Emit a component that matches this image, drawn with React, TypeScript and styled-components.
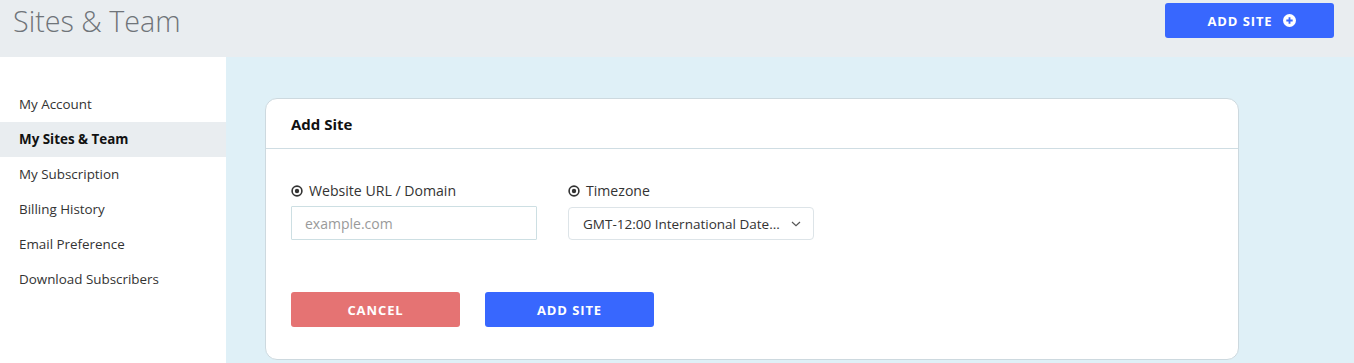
import React from "react";
import styled, { createGlobalStyle } from "styled-components";

const Global = createGlobalStyle`
  html, body { margin: 0; padding: 0; }
  body {
    font-family: "Open Sans", "Noto Sans", sans-serif;
    background: #dff0f7;
    color: #333;
  }
  * { box-sizing: border-box; }
`;

const Page = styled.div`
  display: flex;
  flex-direction: column;
  min-height: 363px;
`;

const TopBar = styled.header`
  height: 57px;
  background: #e9edf0;
  display: flex;
  align-items: flex-start;
  justify-content: space-between;
  padding: 0 20px 0 13px;
`;

const PageTitle = styled.h1`
  margin: 0;
  margin-top: 2px;
  font-weight: 300;
  font-size: 28.7px;
  line-height: 38px;
  color: #6f7479;
`;

const Button = styled.button<{ $variant: "primary" | "danger" }>`
  width: 169px;
  height: 35px;
  border: none;
  border-radius: 3px;
  background: ${(p) => (p.$variant === "primary" ? "#3867fe" : "#e57373")};
  color: #fff;
  font-family: "Open Sans", sans-serif;
  font-weight: 700;
  font-size: 13px;
  letter-spacing: 0.9px;
  display: inline-flex;
  align-items: center;
  justify-content: center;
  gap: 10px;
  cursor: pointer;
  padding: 0;
`;

const HeaderButton = styled(Button)`
  margin-top: 3px;
  padding-left: 4px;
`;

const Body = styled.div`
  display: flex;
  flex: 1;
`;

const Sidebar = styled.nav`
  width: 226px;
  background: #fff;
  padding-top: 30px;
  display: flex;
  flex-direction: column;
`;

const NavItem = styled.div<{ $active?: boolean }>`
  height: 35px;
  display: flex;
  align-items: center;
  padding: 0 0 2px 19px;
  font-size: 13.4px;
  color: ${(p) => (p.$active ? "#111" : "#333")};
  font-weight: ${(p) => (p.$active ? 700 : 400)};
  background: ${(p) => (p.$active ? "#e9edf0" : "transparent")};
`;

const Main = styled.main`
  flex: 1;
  background: #dff0f7;
  padding: 41px 115px 4px 39px;
`;

const Card = styled.section`
  background: #fff;
  border: 1px solid #cdd9df;
  border-radius: 12px;
`;

const CardHeader = styled.div`
  height: 50px;
  border-bottom: 1px solid #cfdde3;
  display: flex;
  align-items: center;
  padding-left: 25px;
`;

const CardTitle = styled.h2`
  margin: 0;
  font-size: 15px;
  font-weight: 700;
  color: #111;
`;

const CardBody = styled.div`
  padding: 32px 25px 32px;
`;

const FieldRow = styled.div`
  display: flex;
  gap: 31px;
`;

const Field = styled.div`
  display: flex;
  flex-direction: column;
  gap: 6px;
`;

const Label = styled.label`
  display: flex;
  align-items: center;
  gap: 6px;
  font-size: 14.1px;
  line-height: 19px;
  color: #333;
`;

const TextInput = styled.input`
  width: 246px;
  height: 34px;
  border: 1px solid #cddfe3;
  border-radius: 1px;
  padding: 0 13px;
  font-family: "Open Sans", sans-serif;
  font-size: 14px;
  color: #333;
  outline: none;
  &::placeholder { color: #9a9a9a; }
`;

const SelectBox = styled.div`
  width: 246px;
  height: 33px;
  margin-top: 1px;
  border: 1px solid #dde4e8;
  border-radius: 4px;
  display: flex;
  align-items: center;
  justify-content: space-between;
  padding: 0 12px 0 14px;
  font-size: 13.5px;
  color: #333;
`;

const Actions = styled.div`
  display: flex;
  gap: 25px;
  margin-top: 52px;
`;

const RadioIcon = () => (
  <svg width="12" height="12" viewBox="0 0 12 12">
    <circle cx="6" cy="6" r="4.9" fill="none" stroke="#333" strokeWidth="1.6" />
    <circle cx="6" cy="6" r="2.2" fill="#333" />
  </svg>
);

const PlusCircle = () => (
  <svg width="13" height="13" viewBox="0 0 14 14">
    <circle cx="7" cy="7" r="7" fill="#fff" />
    <path d="M7 3.6v6.8M3.6 7h6.8" stroke="#3867fe" strokeWidth="2" />
  </svg>
);

const Chevron = () => (
  <svg width="10" height="6" viewBox="0 0 10 6">
    <path d="M1 1l4 3.6L9 1" fill="none" stroke="#555" strokeWidth="1.2" />
  </svg>
);

const navItems = [
  "My Account",
  "My Sites & Team",
  "My Subscription",
  "Billing History",
  "Email Preference",
  "Download Subscribers",
];

export default function App() {
  return (
    <Page>
      <Global />
      <TopBar>
        <PageTitle>Sites &amp; Team</PageTitle>
        <HeaderButton $variant="primary">
          ADD SITE <PlusCircle />
        </HeaderButton>
      </TopBar>
      <Body>
        <Sidebar>
          {navItems.map((n) => (
            <NavItem key={n} $active={n === "My Sites & Team"}>
              {n}
            </NavItem>
          ))}
        </Sidebar>
        <Main>
          <Card>
            <CardHeader>
              <CardTitle>Add Site</CardTitle>
            </CardHeader>
            <CardBody>
              <FieldRow>
                <Field>
                  <Label>
                    <RadioIcon /> Website URL / Domain
                  </Label>
                  <TextInput placeholder="example.com" />
                </Field>
                <Field>
                  <Label>
                    <RadioIcon /> Timezone
                  </Label>
                  <SelectBox>
                    <span>GMT-12:00 International Date...</span>
                    <Chevron />
                  </SelectBox>
                </Field>
              </FieldRow>
              <Actions>
                <Button $variant="danger">CANCEL</Button>
                <Button $variant="primary">ADD SITE</Button>
              </Actions>
            </CardBody>
          </Card>
        </Main>
      </Body>
    </Page>
  );
}
